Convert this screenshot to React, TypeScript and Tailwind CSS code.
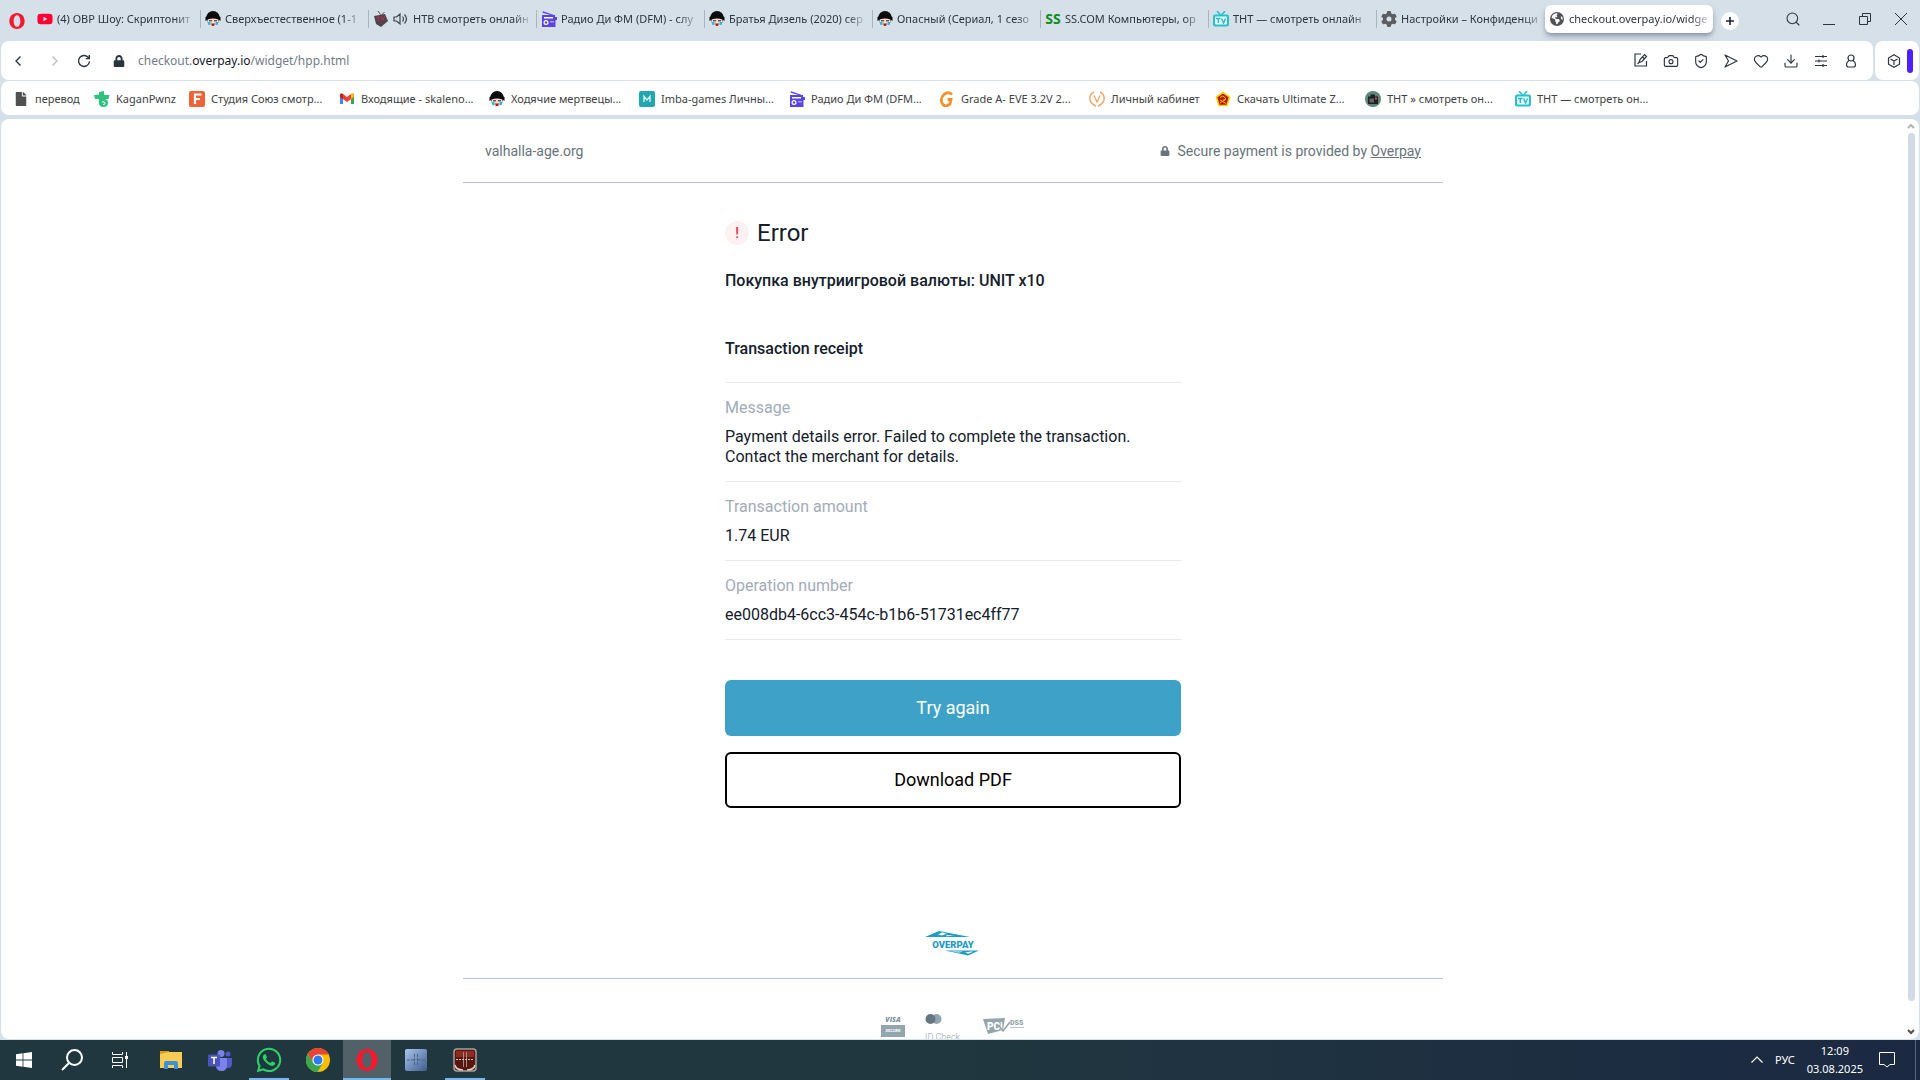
import clsx from "clsx";
import type { ReactNode } from "react";
import { Camera, Download, Heart, Search, ShieldCheck } from "lucide-react";
import { FaLock, FaFile, FaYoutube } from "react-icons/fa";
import { FaGear, FaEarthAmericas, FaWhatsapp } from "react-icons/fa6";

const FaceIcon = () => (
  <svg viewBox="0 0 16 16" className="size-4">
    <circle cx="8" cy="6.800" r="6.800" fill="#0b0b0d" />
    <path d="M2.500 8q5.500-3 11 0v4q-1 3.800-5.500 3.800T2.500 12z" fill="#f3dccf" />
    <path d="M.5 6q7.500-4 15 0v4l-2-1.500q-5.500-2-11 0L.5 10z" fill="#0b0b0d" />
    <path d="M4 9.800h3M9 9.800h3" stroke="#222" />
    <path d="M2.500 11h3v3h-2zM10.500 11h3l-1 3h-2z" fill="#28b5e0" />
    <path d="M6 12.500h4l-1 2.500H7z" fill="#b71c1c" />
  </svg>
);

const RadioIcon = () => (
  <svg viewBox="0 0 16 16" className="size-4" fill="#5b45e0">
    <path d="M2 .2 13 4v1L1.500 1.800z" />
    <path d="M1 4h13v2h2v3h-1.500v7H1z" />
    <path d="M3 6h9v1.500H3z" fill="#fff" />
    <circle cx="5" cy="11.500" r="2.500" fill="#fff" />
    <circle cx="5" cy="11.500" r="1.200" />
    <path d="M9 10h4v1.500H9z" fill="#a99df2" />
  </svg>
);

const TvIcon = () => (
  <svg viewBox="0 0 16 16" className="size-4">
    <path d="M4 0l3.500 4M12 0 8.500 4" stroke="#27c0cb" strokeWidth="1.600" />
    <rect y="3.500" width="16" height="12" rx="2" fill="#27c0cb" />
    <rect x="2" y="5.500" width="12" height="8" rx="1" fill="#e9fbfc" />
    <path d="M3 7.500h4.500M5.300 7.500V12M8.500 7.500l2 4.500 2-4.500" stroke="#27c0cb" strokeWidth="1.500" fill="none" />
  </svg>
);

const DarkTvIcon = () => (
  <svg viewBox="0 0 16 16" className="size-4">
    <path d="M5 0l2.500 3.500M11.500 1 8.500 4" stroke="#5d4a50" />
    <path d="M1 5l11-2 3 7-7 6-5-3z" fill="#4f4449" />
    <path d="M3.500 6.500l3.500-.7M5.300 6.300l.7 4M8 5.500l2 4 1.500-4.500" stroke="#c62b50" fill="none" />
  </svg>
);

const OperaIcon = ({ className }: { className: string }) => (
  <svg viewBox="0 0 24 24" className={className}>
    <path
      fill="#f5182f"
      fillRule="evenodd"
      d="M12 0c7 0 11.500 5.500 11.500 12S19 24 12 24 .5 18.500 .5 12 5 0 12 0zm0 3.200C9 3.200 7 7 7 12s2 8.800 5 8.800 5-3.800 5-8.800-2-8.800-5-8.800z"
    />
  </svg>
);

const SpeakerIcon = () => (
  <svg viewBox="0 0 16 14" className="h-3.5 w-4 shrink-0" fill="none" stroke="#39444e" strokeWidth="1.200">
    <path d="M1 5v4h2.500L7 12V2L3.500 5zM9.500 4.500q2 2.500 0 5M11.500 2.500q4 4.500 0 9" />
  </svg>
);

type Tab = { title: string; icon: ReactNode; sound?: boolean; active?: boolean };

const tabs: Tab[] = [
  { title: "(4) ОВР Шоу: Скриптонит", icon: <FaYoutube className="size-4 text-[#ff0033]" /> },
  { title: "Сверхъестественное (1-1", icon: <FaceIcon /> },
  { title: "НТВ смотреть онлайн", icon: <DarkTvIcon />, sound: true },
  { title: "Радио Ди ФМ (DFM) - слу", icon: <RadioIcon /> },
  { title: "Братья Дизель (2020) сер", icon: <FaceIcon /> },
  { title: "Опасный (Сериал, 1 сезо", icon: <FaceIcon /> },
  { title: "SS.COM Компьютеры, ор", icon: <b className="text-sm leading-4 text-[#0e8c1e]">SS</b> },
  { title: "ТНТ — смотреть онлайн", icon: <TvIcon /> },
  { title: "Настройки – Конфиденци", icon: <FaGear className="size-4 text-[#5a5e62]" /> },
  { title: "checkout.overpay.io/widge", icon: <FaEarthAmericas className="size-3.5 text-[#505356]" />, active: true },
];

const bookmarks = [
  { title: "перевод", width: "w-[81px]", icon: <FaFile className="size-3.5 text-[#505050]" /> },
  {
    title: "KaganPwnz",
    width: "w-[95px]",
    icon: (
      <svg viewBox="0 0 16 16" className="size-4" fill="#2fc27f">
        <path d="M5 1l5-1v4h5.500l-1 4H10q4 0 4 4t-4.500 4Q5 16 5 12V8H1L0 4l5-.5z" />
        <path d="M8 11q3-1 3 1t-2 1.500" stroke="#fff" fill="none" />
      </svg>
    ),
  },
  {
    title: "Студия Союз смотр...",
    width: "w-[150px]",
    icon: (
      <svg viewBox="0 0 16 16" className="size-4">
        <rect width="16" height="16" rx="2" fill="#ee6437" />
        <path d="M6 13V3.500h6.500M6 8h5" stroke="#fff" strokeWidth="2.200" fill="none" />
      </svg>
    ),
  },
  {
    title: "Входящие - skaleno...",
    width: "w-[150px]",
    icon: (
      <svg viewBox="0 0 16 16" className="size-4">
        <path d="M1 3v10h3V6z" fill="#4285f4" />
        <path d="M15 3v10h-3V6z" fill="#34a853" />
        <path d="M1 3.500Q2 2 4 3l4 3 4-3q2-1 3 .5V6l-7 5-7-5z" fill="#ea4335" />
        <path d="M12 3q2-1 3 .5V6l-3 2z" fill="#fbbc04" />
        <path d="M1 3.500V6l3 2V3Q2 2 1 3.500z" fill="#c5221f" />
      </svg>
    ),
  },
  { title: "Ходячие мертвецы...", width: "w-[150px]", icon: <FaceIcon /> },
  {
    title: "Imba-games Личны...",
    width: "w-[150px]",
    icon: (
      <svg viewBox="0 0 16 16" className="size-4">
        <rect width="16" height="16" rx="2" fill="#22a7b1" />
        <path d="M5 11V5.500l3 3.500 3-3.500V11" stroke="#d8f6f8" strokeWidth="1.400" fill="none" />
      </svg>
    ),
  },
  { title: "Радио Ди ФМ (DFM...", width: "w-[150px]", icon: <RadioIcon /> },
  {
    title: "Grade A- EVE 3.2V 2...",
    width: "w-[150px]",
    icon: (
      <svg viewBox="0 0 16 16" className="size-4">
        <path d="M13 3.500Q9 0 5 3.500T3 12t8 1l1-4.500H8.500" stroke="#f2922a" strokeWidth="2.800" fill="none" />
      </svg>
    ),
  },
  {
    title: "Личный кабинет",
    width: "w-[126px]",
    icon: (
      <svg viewBox="0 0 16 16" className="size-4" fill="none" stroke="#f3a466">
        <path d="M5 .8Q.8 3 .8 7.500T6 14.500l1 1M11 .8q4.200 2.200 4.200 6.700T10 14.500l-1 1" strokeWidth="1.400" />
        <path d="M5 4.500l3 6.500 3-6.500" strokeWidth="1.300" />
      </svg>
    ),
  },
  {
    title: "Скачать Ultimate Z...",
    width: "w-[150px]",
    icon: (
      <svg viewBox="0 0 16 16" className="size-4">
        <path d="M8 1.500 14.500 6 12 14.500H4L1.500 6z" fill="#b3170f" stroke="#f5d000" strokeWidth="1.600" />
        <path d="M5 6.500q3-3 5 0t-2 2.500M5 12l6-4M5 9l6 3.500" stroke="#f5c400" fill="none" />
      </svg>
    ),
  },
  {
    title: "ТНТ » смотреть он...",
    width: "w-[150px]",
    icon: (
      <svg viewBox="0 0 16 16" className="size-4">
        <circle cx="8" cy="8" r="8" fill="#5e8778" />
        <path d="M3 5.500h2.500V3.500H10v2h3V13H3z" fill="#1e2022" />
        <path d="M4.500 7.500h4.500v4H4.500z" fill="#5d6669" />
        <path d="M10 6.500h2v2h-2z" fill="#e04a3f" />
      </svg>
    ),
  },
  { title: "ТНТ — смотреть он...", width: "w-[150px]", icon: <TvIcon /> },
];

const toolbarIcons = [
  {
    label: "Edit",
    icon: (
      <svg viewBox="0 0 14 14" className="size-3.5" fill="none" stroke="currentColor" strokeWidth="1.200">
        <path d="M7 1H1v12h11.500V8M5 9.500l1-3L10.500 1.500l2 2L8 8.500zM8.500 4l2 2M5 9.500l-1.500 1.500" />
      </svg>
    ),
  },
  { label: "Snapshot", icon: <Camera className="size-4" strokeWidth={1.7} /> },
  { label: "Protection", icon: <ShieldCheck className="size-4" strokeWidth={1.7} /> },
  {
    label: "Send",
    icon: (
      <svg viewBox="0 0 16 16" className="size-4" fill="none" stroke="currentColor" strokeWidth="1.200" strokeLinejoin="round">
        <path d="M2 2 14 8 2 14 5.500 8z" />
      </svg>
    ),
  },
  { label: "Favourites", icon: <Heart className="size-4" strokeWidth={1.7} /> },
  { label: "Downloads", icon: <Download className="size-4" strokeWidth={1.7} /> },
  {
    label: "Easy setup",
    icon: (
      <svg viewBox="0 0 16 16" className="size-4" stroke="currentColor" strokeWidth="1.200">
        <path d="M2 3.500h12M2 8h12M2 12.500h12M10 2v3M6 6.500v3M10 11v3" />
      </svg>
    ),
  },
  {
    label: "Profile",
    icon: (
      <svg viewBox="0 0 16 16" className="size-4" fill="none" stroke="currentColor" strokeWidth="1.200">
        <circle cx="8" cy="5" r="3" />
        <path d="M6 7.500Q3.500 9 3.500 11.500t2 2.500h5q2 0 2-2.500T10 7.500" />
      </svg>
    ),
  },
];

function TabBar() {
  return (
    <div className="flex h-[41px] items-center text-[#2b3540]">
      <button aria-label="Menu" className="flex w-8 shrink-0 justify-center">
        <OperaIcon className="size-4" />
      </button>
      <div className="flex h-full min-w-0 pt-[5px]">
        {tabs.map((tab, i) => (
          <button
            key={tab.title}
            className={clsx(
              "flex h-7 w-[168px] min-w-0 items-center gap-1 overflow-hidden pl-1",
              tab.active && "rounded-md bg-white shadow-md shadow-slate-500/60"
            )}
          >
            <span className="flex size-4 shrink-0 items-center justify-center">{tab.icon}</span>
            {tab.sound && <SpeakerIcon />}
            <span className="min-w-0 flex-1 overflow-hidden whitespace-nowrap text-left mask-r-from-85%">
              {tab.title}
            </span>
            {i < 8 && <span className="h-[18px] w-px shrink-0 bg-[#aab4bd]" />}
          </button>
        ))}
      </div>
      <button aria-label="New tab" className="ml-2 flex size-[18px] shrink-0 items-center justify-center rounded-full bg-white">
        <svg viewBox="0 0 8 8" className="size-2" stroke="#1c242c" strokeWidth="1.600">
          <path d="M4 0v8M0 4h8" />
        </svg>
      </button>
      <div className="ml-auto flex shrink-0 items-center pb-1">
        <button aria-label="Search tabs" className="flex w-9 justify-center">
          <Search className="size-4" strokeWidth={1.6} />
        </button>
        <button aria-label="Minimize" className="flex w-9 justify-center">
          <svg viewBox="0 0 12 12" className="size-3" stroke="currentColor">
            <path d="M0 11.500h12" />
          </svg>
        </button>
        <button aria-label="Restore" className="flex w-9 justify-center">
          <svg viewBox="0 0 12 12" className="size-3" fill="none" stroke="currentColor">
            <path d="M.5 3.500h8v8h-8zM3.500 3.500v-3h8v8h-3" />
          </svg>
        </button>
        <button aria-label="Close" className="flex w-9 justify-center">
          <svg viewBox="0 0 12 12" className="size-3" stroke="currentColor">
            <path d="M0 0l12 12M12 0 0 12" />
          </svg>
        </button>
      </div>
    </div>
  );
}

function AddressBar() {
  return (
    <div className="flex h-[39px] gap-0.5 text-[#2b3540]">
      <div className="flex min-w-0 flex-1 items-center rounded-lg bg-white">
        <button aria-label="Back" className="flex w-[34px] justify-center">
          <svg viewBox="0 0 8 12" className="h-3 w-2" fill="none" stroke="currentColor" strokeWidth="1.400">
            <path d="M6.500 1.500 2 6l4.500 4.500" />
          </svg>
        </button>
        <button aria-label="Forward" className="flex w-10 justify-center text-[#b9bec3]">
          <svg viewBox="0 0 8 12" className="h-3 w-2" fill="none" stroke="currentColor" strokeWidth="1.400">
            <path d="M1.500 1.500 6 6l-4.500 4.500" />
          </svg>
        </button>
        <button aria-label="Reload" className="flex w-[18px] justify-center">
          <svg viewBox="0 0 14 14" className="size-3.5" fill="none" stroke="currentColor" strokeWidth="1.400">
            <path d="M11.800 4.200A5.500 5.500 0 1 0 12.500 7.500M12.300 1v3.600H8.800" />
          </svg>
        </button>
        <FaLock className="ml-5 size-3" />
        <div className="ml-[13px] text-xs text-[#717c8a]">
          checkout.<span className="text-[#12181e]">overpay.io</span>/widget/hpp.html
        </div>
        <div className="ml-auto flex pr-[7px]">
          {toolbarIcons.map((item) => (
            <button key={item.label} aria-label={item.label} className="flex w-[30px] justify-center">
              {item.icon}
            </button>
          ))}
        </div>
      </div>
      <div className="flex w-11 items-center justify-end gap-1.5 rounded-lg bg-white pr-1.5">
        <button aria-label="Extensions">
          <svg viewBox="0 0 14 14" className="size-3.5" fill="none" stroke="currentColor" strokeWidth="1.200">
            <path d="M7 .8 12.500 4v6.200L7 13.300l-5.500-3.100V4zM3.500 5 7 7l3.500-2M7 7v4" />
          </svg>
        </button>
        <span className="h-6 w-1.5 rounded-full bg-[#4b1fff]" />
      </div>
    </div>
  );
}

function BookmarkBar() {
  return (
    <nav className="mt-px flex h-[34px] items-center rounded-lg bg-white pl-3 pt-0.5 text-[#3f4245]">
      {bookmarks.map((item) => (
        <a key={item.title} href="#" className={clsx("flex shrink-0 items-center gap-1.5 whitespace-nowrap", item.width)}>
          <span className="flex size-4 shrink-0 items-center justify-center">{item.icon}</span>
          {item.title}
        </a>
      ))}
    </nav>
  );
}

function ReceiptRow({ label, value }: { label: string; value: string }) {
  return (
    <div className="border-b border-[#e9eaec] pt-[15px] pb-3.5">
      <dt className="leading-5 text-[#a3abba]">{label}</dt>
      <dd className="mt-[9px] leading-5">{value}</dd>
    </div>
  );
}

function OverpayLogo() {
  return (
    <svg viewBox="0 0 56 25" className="h-[25px] w-14" fill="#1e9cc6">
      <path d="M0 6 14 0l31 6z" />
      <path d="M13 3.500l4-2 5 1-5 2zM22 4l7 .8-8 .4z" fill="#fff" />
      <path d="M20 19.500h34L43 24.500z" />
      <path d="M25 20.500h13l-4 1zM40 21.500l6-1 2 .2-5 2z" fill="#fff" />
      <text x="28" y="17" textAnchor="middle" fontFamily="Roboto" fontSize="9.500" fontWeight="900">
        OVERPAY
      </text>
    </svg>
  );
}

function PaymentBadges() {
  return (
    <div className="flex justify-center">
      <svg viewBox="0 0 24 28" className="h-7 w-6">
        <text x="12" y="8" textAnchor="middle" fontFamily="Open Sans" fontSize="7" fontWeight="800" fontStyle="italic" fill="#7f939c">
          VISA
        </text>
        <rect y="11" width="24" height="12" fill="#93a5ad" />
        <text x="12" y="18" textAnchor="middle" fontFamily="Roboto" fontSize="4" fontWeight="700" fill="#fff">
          SECURE
        </text>
      </svg>
      <svg viewBox="0 0 38 28" className="ml-5 h-7 w-[38px]">
        <circle cx="11.500" cy="5" r="5" fill="#93a5ad" />
        <circle cx="5.500" cy="5" r="5" fill="#66767e" />
        <text x="0" y="26" fontFamily="Roboto" fontSize="9" fontWeight="300" fill="#98a4aa">
          ID Check
        </text>
      </svg>
      <svg viewBox="0 0 42 28" className="ml-5 h-7 w-[42px]">
        <path d="M0 5l22-1-2 12L5 20z" fill="#93a5ad" />
        <text x="4" y="16" fontFamily="Roboto" fontSize="10" fontWeight="900" fill="#fff">
          PCi
        </text>
        <path d="M17 13l3 4 7-9" stroke="#93a5ad" strokeWidth="1.500" fill="none" />
        <text x="27" y="11" fontFamily="Roboto" fontSize="7" fontWeight="900" fill="#93a5ad">
          DSS
        </text>
        <path d="M27 13.500h14" stroke="#b9c5ca" />
      </svg>
    </div>
  );
}

function Checkout() {
  return (
    <div className="flex min-w-0 flex-1 flex-col overflow-hidden font-[Roboto,sans-serif] text-base text-[#14202b]">
      <header className="mx-auto flex h-16 w-full max-w-[980px] shrink-0 items-center justify-between border-b border-[#b5c2dd] px-[22px] text-sm text-[#69737b]">
        <span>valhalla-age.org</span>
        <span className="flex items-center gap-2">
          <FaLock className="size-2.5" />
          <span>
            Secure payment is provided by{" "}
            <a href="#" className="underline">
              Overpay
            </a>
          </span>
        </span>
      </header>
      <main className="mx-auto w-full max-w-[456px] pt-[34px]">
        <div className="flex h-8 items-center gap-2">
          <span className="flex size-6 items-center justify-center rounded-full bg-[#fdf1f2] text-sm font-medium text-[#dc3546]">!</span>
          <h1 className="text-2xl">Error</h1>
        </div>
        <p className="mt-[22px] font-medium leading-5">Покупка внутриигровой валюты: UNIT x10</p>
        <h2 className="mt-12 font-medium leading-5">Transaction receipt</h2>
        <dl className="mt-[23px] border-t border-[#e9eaec]">
          <ReceiptRow
            label="Message"
            value="Payment details error. Failed to complete the transaction. Contact the merchant for details."
          />
          <ReceiptRow label="Transaction amount" value="1.74 EUR" />
          <ReceiptRow label="Operation number" value="ee008db4-6cc3-454c-b1b6-51731ec4ff77" />
        </dl>
        <div className="mt-10 flex flex-col gap-4 text-lg">
          <button className="h-14 rounded-md bg-[#3ea2c8] text-white">Try again</button>
          <button className="h-14 rounded-md border-2 border-black text-black">Download PDF</button>
        </div>
      </main>
      <footer className="mx-auto mt-[123px] w-full max-w-[980px]">
        <div className="flex justify-center border-b border-[#b5c2dd] pb-[22px]">
          <OverpayLogo />
        </div>
        <div className="pt-[35px]">
          <PaymentBadges />
        </div>
      </footer>
    </div>
  );
}

function TeamsIcon() {
  return (
    <svg viewBox="0 0 24 24" className="size-6">
      <circle cx="13" cy="5.500" r="3.500" fill="#7b83eb" />
      <circle cx="20" cy="6" r="2.500" fill="#5059c9" />
      <path d="M17 10h7v6q0 4-4 4t-4-3z" fill="#5059c9" />
      <path d="M8 10h11v7q0 6-5.500 6T8 17z" fill="#7b83eb" />
      <rect y="6.500" width="12" height="12" rx="1" fill="#4b53bc" />
      <path d="M3 9.500h6M6 9.500v6.500" stroke="#fff" strokeWidth="1.600" />
    </svg>
  );
}

function ChromeIcon() {
  return (
    <svg viewBox="0 0 24 24" className="size-6">
      <circle cx="12" cy="12" r="12" fill="#fbbc04" />
      <path d="M1.600 6A12 12 0 0 1 22.400 6L22.600 6.500H12L7.200 15z" fill="#ea4335" />
      <path d="M1.600 6A12 12 0 0 0 11.500 24L16.800 15 12 12 7.200 15z" fill="#34a853" />
      <circle cx="12" cy="12" r="5.600" fill="#fff" />
      <circle cx="12" cy="12" r="4.500" fill="#2c7bf0" />
    </svg>
  );
}

const apps = [
  {
    label: "Explorer",
    icon: (
      <svg viewBox="0 0 22 20" className="h-5 w-[22px]">
        <path d="M0 1h9v3H0z" fill="#dd9a12" />
        <path d="M0 4l9-2h13v16H0z" fill="#fccb52" />
        <path d="M4 19v-6q0-2 2-2h10q2 0 2 2v6h-4v-4H8v4z" fill="#3a93d8" />
      </svg>
    ),
  },
  { label: "Teams", icon: <TeamsIcon /> },
  { label: "WhatsApp", icon: <FaWhatsapp className="size-7 text-[#2bd366]" />, line: "w-10" },
  { label: "Chrome", icon: <ChromeIcon /> },
  { label: "Opera", icon: <OperaIcon className="size-[22px]" />, line: "w-12", active: true },
  {
    label: "Lineage",
    icon: (
      <svg viewBox="0 0 22 22" className="size-[22px]">
        <defs>
          <linearGradient id="blue" x1="0" y1="0" x2="1" y2="1">
            <stop stopColor="#a9c6ee" />
            <stop offset="1" stopColor="#405c8c" />
          </linearGradient>
        </defs>
        <rect width="22" height="22" rx="2" fill="url(#blue)" />
        <path d="M9.500 5v12M12.500 5v12M2 11h7M13 11h7" stroke="#4c6389" strokeDasharray="3 1" />
      </svg>
    ),
  },
  {
    label: "Lineage II",
    icon: (
      <svg viewBox="0 0 24 24" className="size-6">
        <rect x="1" y="1" width="22" height="22" rx="3" fill="#571610" stroke="#a8a09b" strokeWidth="1.500" />
        <path d="M3 3h18v6H3z" fill="#8e2c22" />
        <path d="M10.500 4v15M13.500 4v15" stroke="#9d8f88" fill="none" />
        <path d="M3 11.500h18" stroke="#cfc4bc" strokeDasharray="2 1" />
        <path d="M2 17q1 5 8 5M22 17q-1 5-8 5" stroke="#d8cfc8" strokeWidth="1.500" fill="none" />
      </svg>
    ),
    line: "w-10",
  },
];

function Taskbar() {
  return (
    <footer className="flex h-10 shrink-0 items-center bg-linear-to-r from-[#21373f] via-[#20373f] to-[#1b2842] font-[Noto_Sans,sans-serif] text-[11px] text-white">
      <button aria-label="Start" className="flex w-12 justify-center">
        <svg viewBox="0 0 16 16" className="size-4" fill="#fff">
          <path d="M0 2.200 6.600 1.300v6.300H0zM7.400 1.200 16 0v7.600H7.400zM0 8.400h6.600v6.300L0 13.800zM7.400 8.400H16V16l-8.600-1.200z" />
        </svg>
      </button>
      <button aria-label="Search" className="flex w-12 justify-center">
        <svg viewBox="0 0 22 22" className="size-[22px]" fill="none" stroke="#fff" strokeWidth="2">
          <circle cx="13.500" cy="8.500" r="7.500" />
          <path d="M8 14l-7 7" />
        </svg>
      </button>
      <button aria-label="Task view" className="mr-[3px] flex w-12 justify-center">
        <svg viewBox="0 0 16 16" className="size-4" fill="none" stroke="#fff">
          <path d="M.5 0v2.500h10V0M.5 5.500h10v5H.5zM.5 16v-2.500h10V16M14.500 0v16" />
          <path d="M13 4h3v3h-3z" fill="#fff" stroke="none" />
        </svg>
      </button>
      {apps.map((app) => (
        <button
          key={app.label}
          aria-label={app.label}
          className={clsx("relative mr-px flex h-10 w-12 items-center justify-center", app.active && "bg-[#526067]")}
        >
          {app.icon}
          {app.line && <span className={clsx("absolute bottom-0 h-0.5 bg-[#76b9ed]", app.line)} />}
        </button>
      ))}
      <div className="ml-auto flex h-full items-center">
        <button aria-label="Hidden icons">
          <svg viewBox="0 0 12 8" className="h-2 w-3" fill="none" stroke="#fff" strokeWidth="1.200">
            <path d="M.5 6.500 6 1l5.500 5.500" />
          </svg>
        </button>
        <span className="ml-3">РУС</span>
        <div className="ml-3 text-center leading-[18px]">
          <div>12:09</div>
          <div>03.08.2025</div>
        </div>
        <button aria-label="Notifications" className="ml-4 mr-5">
          <svg viewBox="0 0 16 16" className="size-4" fill="none" stroke="#fff">
            <path d="M.5 .5h15v12H11L8 15l-3-2.500H.5z" />
          </svg>
        </button>
        <span className="mr-1 h-full w-px bg-[#5c6679]" />
      </div>
    </footer>
  );
}

export default function App() {
  return (
    <div className="flex h-screen min-w-[1280px] flex-col overflow-hidden bg-[#d6e0e9]">
      <div className="px-px font-[Noto_Sans,sans-serif] text-[11px]">
        <TabBar />
        <AddressBar />
        <BookmarkBar />
      </div>
      <div className="mx-px mt-1 mb-px flex min-h-0 flex-1 overflow-hidden rounded-lg bg-white">
        <Checkout />
        <div className="flex w-3.5 shrink-0 flex-col items-center pt-1 pb-1 pr-0.5">
          <svg viewBox="0 0 8 6" className="h-1.5 w-2" fill="none" stroke="#b4b4b4" strokeWidth="2">
            <path d="M1 5l3-3 3 3" />
          </svg>
          <div className="mt-1 mb-7 w-[7px] flex-1 rounded-full bg-[#d0dbe5]" />
          <svg viewBox="0 0 8 6" className="h-1.5 w-2" fill="none" stroke="#505050" strokeWidth="2">
            <path d="M1 1l3 3 3-3" />
          </svg>
        </div>
      </div>
      <Taskbar />
    </div>
  );
}
